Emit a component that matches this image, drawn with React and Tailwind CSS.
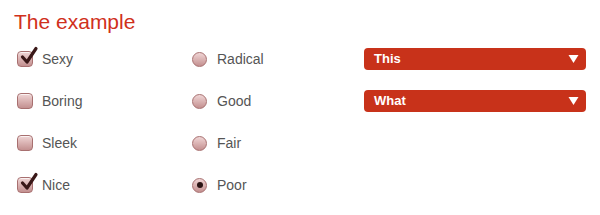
import React, { useState } from "react";

const font = { fontFamily: '"Liberation Sans", Arial, sans-serif' };

function Check({ checked, label }) {
  return (
    <label className="flex items-center h-[42px] gap-[9px] cursor-pointer">
      <span className="relative w-[16px] h-[16px] rounded-[4px] border border-[#a87070] bg-gradient-to-b from-[#f0d6d6] to-[#c39090] shadow-[inset_0_1px_0_rgba(255,255,255,0.7)]">
        {checked && (
          <svg viewBox="0 0 20 20" className="absolute left-[1px] -top-[6px] w-[20px] h-[20px]">
            <path d="M3.5 11 L8 16 L17 2.5" fill="none" stroke="#3a1818" strokeWidth="3.2" strokeLinecap="round" strokeLinejoin="round" />
          </svg>
        )}
      </span>
      <span className="text-[14px] text-[#555]">{label}</span>
    </label>
  );
}

function Radio({ checked, label }) {
  return (
    <label className="flex items-center h-[42px] gap-[10px] cursor-pointer">
      <span className="flex items-center justify-center w-[15px] h-[15px] rounded-full border border-[#a87070] bg-gradient-to-b from-[#f0d6d6] to-[#c39090]">
        {checked && <span className="w-[6px] h-[6px] rounded-full bg-[#2a1414]" />}
      </span>
      <span className="text-[14px] text-[#555]">{label}</span>
    </label>
  );
}

function Select({ value }) {
  return (
    <div className="flex items-center justify-between w-[222px] h-[22px] rounded-[4px] bg-[#c8321a] pl-[10px] pr-[7px] text-white text-[13px] font-bold">
      <span>{value}</span>
      <svg viewBox="0 0 10 8" className="w-[11px] h-[8px]">
        <path d="M0 0 L10 0 L5 8 Z" fill="#fff" />
      </svg>
    </div>
  );
}

export default function App() {
  const [c] = useState({ sexy: true, boring: false, sleek: false, nice: true });
  return (
    <div className="w-[600px] h-[215px] bg-white px-[14px] pt-[8px]" style={font}>
      <h1 className="text-[21px] leading-[28px] text-[#d0301c]">The example</h1>
      <div className="flex mt-[2px]">
        <div className="w-[175px] pl-[3px]">
          <Check checked={c.sexy} label="Sexy" />
          <Check checked={c.boring} label="Boring" />
          <Check checked={c.sleek} label="Sleek" />
          <Check checked={c.nice} label="Nice" />
        </div>
        <div className="w-[175px] pl-[3px]">
          <Radio label="Radical" />
          <Radio label="Good" />
          <Radio label="Fair" />
          <Radio checked label="Poor" />
        </div>
        <div className="flex flex-col">
          <div className="h-[42px] flex items-center"><Select value="This" /></div>
          <div className="h-[42px] flex items-center"><Select value="What" /></div>
        </div>
      </div>
    </div>
  );
}
